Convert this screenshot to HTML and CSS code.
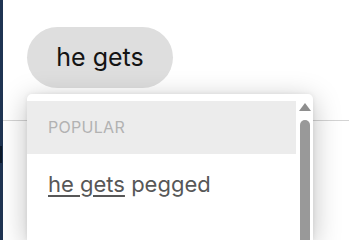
FILE: index.html
```html
<!DOCTYPE html>
<html>
<head>
<meta charset="utf-8">
<link rel="stylesheet" href="styles.css">
</head>
<body>
<div class="rail"><span class="rail-mark"></span></div>
<div class="main">
  <div class="pill">he gets</div>
  <div class="divider"></div>
  <div class="menu">
    <div class="menu-list">
      <div class="menu-header">POPULAR</div>
      <div class="menu-item"><span class="match">he gets</span> pegged</div>
    </div>
    <div class="scrollbar">
      <div class="scroll-arrow"></div>
      <div class="scroll-thumb"></div>
    </div>
  </div>
</div>
</body>
</html>
```
FILE: styles.css
```css
html, body {
  margin: 0;
  padding: 0;
  height: 100%;
  overflow: hidden;
  background: #fff;
  font-family: Inter, "Liberation Sans", sans-serif;
}
body {
  display: flex;
}
.rail {
  width: 3px;
  background: #1f3452;
  flex: none;
  display: flex;
  flex-direction: column;
  padding-top: 146px;
  box-sizing: border-box;
}
.rail-mark {
  display: block;
  width: 2px;
  height: 17px;
  background: #0d1a2b;
}
.main {
  position: relative;
  flex: 1;
  height: 100%;
  box-sizing: border-box;
  padding-top: 27px;
}
.pill {
  margin-left: 24px;
  width: 146px;
  height: 61px;
  box-sizing: border-box;
  border-radius: 31px;
  background: #dedede;
  color: #141414;
  font-size: 25px;
  display: flex;
  align-items: center;
  justify-content: center;
  padding-bottom: 2px;
}
.divider {
  margin-top: 32px;
  border-top: 1px solid #d4d4d4;
}
.menu {
  position: absolute;
  left: 24px;
  top: 94px;
  bottom: 0;
  width: 286px;
  background: #fff;
  border-radius: 5px 5px 0 0;
  box-shadow: 0 6px 28px rgba(0, 0, 0, 0.26), 0 0 5px rgba(0, 0, 0, 0.07);
  display: flex;
  padding-top: 7px;
  box-sizing: border-box;
}
.menu-list {
  width: 269px;
}
.menu-header {
  height: 53px;
  background: #ececec;
  color: #b2b2b2;
  font-size: 16px;
  letter-spacing: 0.3px;
  padding-left: 21px;
  display: flex;
  align-items: center;
  padding-bottom: 1px;
  box-sizing: border-box;
}
.menu-item {
  color: #575757;
  font-size: 22px;
  padding-left: 21px;
  padding-top: 17px;
}
.match {
  text-decoration: underline;
  text-decoration-thickness: 2px;
  text-underline-offset: 3px;
}
.scrollbar {
  flex: 1;
  display: flex;
  flex-direction: column;
  align-items: center;
  padding-top: 2px;
}
.scroll-arrow {
  width: 0;
  height: 0;
  border-left: 6px solid transparent;
  border-right: 6px solid transparent;
  border-bottom: 8px solid #8e8e8e;
  margin-left: 1px;
}
.scroll-thumb {
  margin-top: 9px;
  width: 10px;
  flex: 1;
  background: #999;
  border-radius: 5px 5px 0 0;
}
```
